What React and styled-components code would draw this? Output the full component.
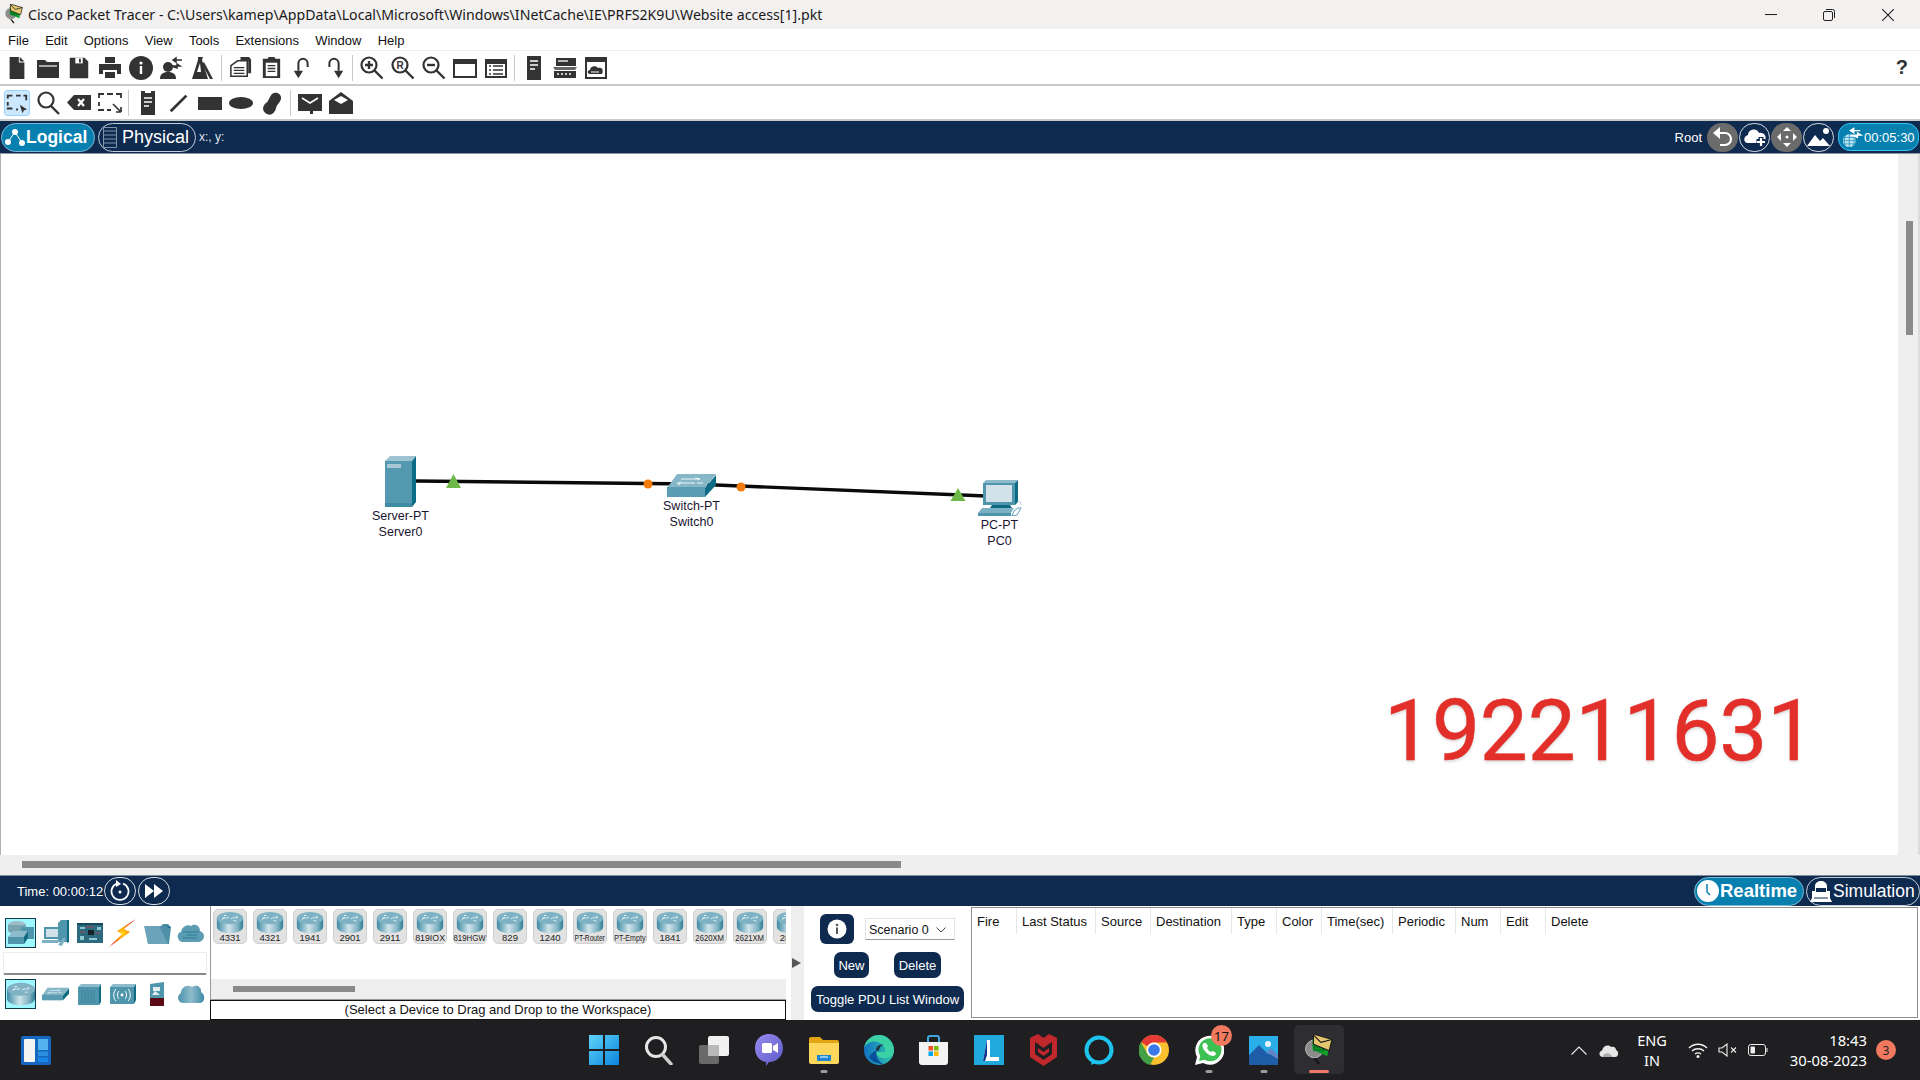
import React, { useId } from "react";
import styled, { createGlobalStyle } from "styled-components";

const Global = createGlobalStyle`
  html, body { margin: 0; padding: 0; background: #fff; }
  * { box-sizing: border-box; }
  body { font-family: "Liberation Sans", Arial, sans-serif; color: #111; }
`;

const NAVY = "#0e2a4f";
const BLUE = "#0780b0";

const Screen = styled.div`
  width: 1920px; height: 1080px; display: flex; flex-direction: column; overflow: hidden;
`;

/* ---- title + menu ---- */
const TitleBar = styled.div`
  height: 29px; flex: none; background: #f3f0f0; display: flex; align-items: center; padding-left: 5px;
`;
const TitleText = styled.span`
  margin-left: 5px; font-family: "Noto Sans", sans-serif; font-size: 14.15px; color: #1a1a1a; white-space: nowrap;
`;
const WinControls = styled.div`
  margin-left: auto; display: flex; height: 100%; align-items: center; padding-right: 3px;
`;
const WinBtn = styled.div`
  width: 58.5px; display: flex; justify-content: center; align-items: center;
`;
const MenuBar = styled.div`
  height: 22px; flex: none; background: #fff; border-bottom: 1px solid #eeeeee; display: flex; align-items: center; padding: 1px 0 0 8px; gap: 16.2px; font-size: 13px;
`;
const MenuItem = styled.span` color: #111; `;

/* ---- toolbars ---- */
const Toolbar = styled.div`
  flex: none; height: ${(p) => p.$h}px; background: #fff; border-bottom: 2px solid ${(p) => p.$line}; display: flex; align-items: center; padding-left: 1px; padding-right: 8px;
`;
const ToolSlot = styled.div`
  width: 31px; height: 26px; display: flex; align-items: center; justify-content: center; flex: none;
`;
const ToolSvg = styled.svg`
  display: block; width: ${(p) => p.$s || 24}px; height: ${(p) => p.$s || 24}px; fill: #333; stroke: none;
  ${(p) => p.$selected && `background:#cce8ff; outline:1px solid #99d1ff; border-radius:2px;`}
`;
const ToolSep = styled.div`
  width: 7px; height: 26px; flex: none; position: relative;
  &::after { content: ""; position: absolute; left: 3px; top: 0; bottom: 0; width: 1px; background: #c9c9c9; }
`;
const HelpMark = styled.span`
  margin-left: auto; font-size: 20px; font-weight: 700; color: #333; margin-right: 4px;
`;

/* ---- nav bar ---- */
const NavBar = styled.div`
  flex: none; height: 33px; background: ${NAVY}; display: flex; align-items: center; padding: 0 1px; color: #fff; border-bottom: 1px solid #8a97a8;
`;
const Pill = styled.div`
  height: 29px; display: flex; align-items: center; border-radius: 15px; color: #fff;
  border: 1px solid ${(p) => (p.$active ? "#7fb6d2" : "#c4cfdb")};
  background: ${(p) => (p.$active ? BLUE : "transparent")};
  font-size: ${(p) => p.$fs}px; font-weight: ${(p) => (p.$active ? 700 : 400)};
  width: ${(p) => p.$w}px; margin-left: ${(p) => p.$ml || 0}px; flex: none; padding-left: ${(p) => p.$pl || 2}px; gap: ${(p) => p.$gap || 0}px;
`;
const Coord = styled.span` font-size: 12px; margin-left: 3px; color: #dfe6ee; `;
const NavRight = styled.div` margin-left: auto; display: flex; align-items: center; gap: 1px; `;
const RootLabel = styled.span` font-size: 13px; margin-right: 4px; `;
const RoundBtn = styled.div`
  width: 31px; height: 29px; border-radius: 15px; display: flex; align-items: center; justify-content: center; flex: none;
  ${(p) => (p.$filled ? "background:#6b6b6b;" : "border:1px solid #d5dce5;")}
`;
const Clock = styled.div`
  width: 81px; height: 28px; margin-left: 3px; background: ${BLUE}; border: 1px solid #35c3f0; border-radius: 12px; display: flex; align-items: center; gap: 1px; padding-left: 2px; font-size: 13px; color: #fff;
`;

/* ---- workspace ---- */
const Workspace = styled.div`
  flex: 1; min-height: 0; display: grid; grid-template-columns: 1fr 22px; grid-template-rows: 1fr 20px; background: #efefef;
`;
const Canvas = styled.div`
  position: relative; background: #fff; border-left: 1px solid #b0b0b0; overflow: hidden;
`;
const LinkLayer = styled.svg`
  position: absolute; inset: 0; width: 100%; height: 100%;
`;
const Node = styled.div`
  position: absolute; left: ${(p) => p.$cx - 60}px; top: ${(p) => p.$top}px; width: 120px; display: flex; flex-direction: column; align-items: center;
`;
const NodeLabel = styled.div`
  font-size: 12.5px; line-height: 15.6px; color: #1a1430; text-align: center; white-space: nowrap;
`;
const NodeLabels = styled.div` margin-top: ${(p) => p.$mt}px; `;
const Watermark = styled.div`
  position: absolute; left: 1383px; top: 527px; font-family: Roboto, sans-serif; font-size: 85.5px; line-height: 100px; color: #e32f29;
  -webkit-text-stroke: .5px #e32f29;
  text-shadow: 0 2px 3px rgba(90, 90, 90, .25); letter-spacing: -.15px;
`;
const VTrack = styled.div`
  border-right: 2px solid #dcdcdc; padding: 67px 0 0 8px;
`;
const VThumb = styled.div` width: 7px; height: 114px; background: #8a8a8a; `;
const HTrack = styled.div` padding: 6px 0 0 22px; grid-column: 1 / 2; `;
const HThumb = styled.div` width: 879px; height: 7px; background: #8a8a8a; `;

/* ---- time bar ---- */
const TimeBar = styled.div`
  flex: none; height: 31px; background: ${NAVY}; border-top: 1px solid #7d8a9b; display: flex; align-items: center; color: #fff; padding-left: 17px; padding-right: 0;
`;
const TimeText = styled.span` font-size: 13px; width: 87px; flex: none; white-space: nowrap; `;
const CircleBtn = styled.div`
  width: 32px; height: 28px; border: 1px solid #d5dce5; border-radius: 15px; display: flex; align-items: center; justify-content: center; flex: none; margin-right: 2px;
`;

/* ---- bottom panel ---- */
const Bottom = styled.div`
  flex: none; height: 114px; display: flex; background: #fff;
`;
const Palette = styled.div`
  width: 210px; flex: none; display: flex; flex-direction: column; padding: 12px 0 0 5px;
`;
const CatRow = styled.div` display: flex; height: 30px; align-items: center; `;
const CatCell = styled.div`
  width: ${(p) => p.$w}px; height: 30px; flex: none; display: flex; align-items: center; justify-content: center;
  ${(p) => p.$on && `background:#9ff8ff; border:1px solid #123a4a;`}
`;
const SubTitle = styled.div`
  height: 23px; width: 204px; margin: 4px 0 4px -2px; border: 1px solid #ececec; border-bottom: 2px solid #8a8a8a; border-radius: 2px; background: #fff;
`;
const Gallery = styled.div`
  width: 576px; flex: none; display: flex; flex-direction: column; border-left: 1px solid #9a9a9a;
`;
const Tiles = styled.div`
  flex: 1; display: flex; gap: 6px; padding: 3px 0 0 2px; overflow: hidden; min-height: 0;
`;
const Tile = styled.div`
  width: 34px; height: 35px; flex: none; background: #e2e2e2; border: 1px solid #cfcfcf; border-radius: 5px; display: flex; flex-direction: column; align-items: center; padding-top: 2px;
`;
const TileLabel = styled.span`
  font-size: 9.5px; line-height: 10px; color: #222; white-space: nowrap; display: inline-block;
  transform: scaleX(${(p) => p.$sx});
`;
const GalleryScroll = styled.div`
  height: 21px; flex: none; background: #eeeeee; padding: 7px 0 0 22px; border-bottom: 1px solid #9a9a9a;
`;
const GalleryThumb = styled.div` width: 122px; height: 6px; background: #8a8a8a; `;
const SelectHint = styled.div`
  height: 20px; flex: none; border: 1.5px solid #111; margin-left: -1px; text-align: center; font-size: 13px; line-height: 17px; color: #111; white-space: nowrap;
`;
const Splitter = styled.div`
  width: 23px; flex: none; display: flex; align-items: center; border-left: 5px solid #fff; border-right: 5px solid #fff; background: #eee; padding-left: 1px;
`;
const ArrowRight = styled.div`
  width: 0; height: 0; border-left: 9px solid #555; border-top: 5px solid transparent; border-bottom: 5px solid transparent;
`;
const Scenario = styled.div`
  width: 162px; flex: none; display: flex; flex-direction: column; align-items: flex-start; padding-top: 8px;
`;
const ScenarioTop = styled.div` display: flex; align-items: center; margin-left: 11px; gap: 11px; height: 30px; `;
const InfoBtn = styled.div`
  width: 34px; height: 30px; background: ${NAVY}; border-radius: 6px; display: flex; align-items: center; justify-content: center;
`;
const Combo = styled.div`
  width: 90px; height: 22px; border: 1px solid #e3e3e3; border-bottom: 1.5px solid #9a9a9a; display: flex; align-items: center; justify-content: space-between; font-size: 12.5px; padding: 1px 8px 0 3px; color: #111;
`;
const NavyBtn = styled.div`
  height: 26px; background: ${NAVY}; color: #fff; border-radius: 7px; font-size: 13px; display: flex; align-items: center; justify-content: center; white-space: nowrap;
  width: ${(p) => p.$w}px; margin-left: ${(p) => p.$ml || 0}px; flex: none;
`;
const BtnRow = styled.div` display: flex; margin-top: 8px; `;
const PduTable = styled.div`
  flex: 1; margin: 1px 2px 2px 0; border: 1.5px solid #8f8f8f; background: #fff; min-width: 0;
`;
const PduHead = styled.div` display: flex; height: 26px; `;
const PduCol = styled.div`
  width: ${(p) => (p.$w ? p.$w + "px" : "auto")}; flex: none; border-right: ${(p) => (p.$w ? "1px solid #e8e8e8" : "none")}; padding: 7px 0 0 5px; font-size: 13px; line-height: 14px; color: #111; white-space: nowrap;
`;

/* ---- taskbar ---- */
const Taskbar = styled.div`
  flex: none; height: 60px; background: #1f1f22; display: flex; align-items: center; color: #fff; padding-left: 21px;
`;
const CenterIcons = styled.div` display: flex; margin-left: 525px; height: 60px; `;
const TaskItem = styled.div`
  width: 55px; height: 60px; flex: none; display: flex; align-items: center; justify-content: center; position: relative;
  ${(p) => p.$active && `
    &::before { content:""; position:absolute; left:2.5px; right:2.5px; top:5px; bottom:6px; background:#2e2e32; border-radius:5px; }
  `}
  & > svg { position: relative; }
`;
const RunDot = styled.span`
  position: absolute; bottom: 7px; left: 50%; transform: translateX(-50%); height: 3px; border-radius: 2px;
  width: ${(p) => (p.$active ? 20 : 7)}px; background: ${(p) => (p.$active ? "#f0796a" : "#9c9c9c")};
`;
const Badge = styled.span`
  position: absolute; top: 5px; left: 30px; width: 21px; height: 21px; border-radius: 50%; background: #f0795f; color: #111; font-family: "Noto Sans", sans-serif; font-size: 13px; display: flex; align-items: center; justify-content: center;
`;
const Tray = styled.div`
  margin-left: auto; display: flex; align-items: center; font-family: "Noto Sans", sans-serif; padding-right: 24px;
`;
const Lang = styled.div`
  width: 46px; margin-left: 10px; text-align: center; font-size: 14.5px; line-height: 20px;
`;
const TrayIcon = styled.svg`
  display: block; flex: none; margin-left: ${(p) => p.$ml || 0}px;
`;
const Clock2 = styled.div`
  text-align: right; font-size: 14.8px; line-height: 20px; margin-left: 9px; width: 90px;
`;
const Notify = styled.span`
  width: 20px; height: 20px; border-radius: 50%; background: #f0795f; color: #222; font-size: 12px; display: flex; align-items: center; justify-content: center; margin-left: 9px;
`;

/* ---- icon helpers ---- */
const Tool = ({ children, selected, s }) => (
  <ToolSlot>
    <ToolSvg viewBox="0 0 26 26" $selected={selected} $s={s}>{children}</ToolSvg>
  </ToolSlot>
);
const W = "#fff";
const D = "#333";

const Mag = ({ children }) => (
  <Tool s={26}>
    <circle cx="10" cy="10" r="7.5" fill="none" stroke={D} strokeWidth="2.2" />
    <path d="M15.5 15.5 L23.5 23.5" stroke={D} strokeWidth="2.4" />
    {children}
  </Tool>
);

const Toolbar1 = () => (
  <Toolbar $h={35} $line="#c9c9c9">
    <Tool><path d="M5 1h10v6h6v18H5z" /><path d="M16 1l5 5h-5z" /></Tool>
    <Tool s={26}><path d="M2 5h8l2 2h12v16H2z" /><path d="M4 11h18" stroke={W} strokeWidth="1.2" /></Tool>
    <Tool><path d="M3 2h16l4 4v18H3z" /><path d="M9 2h8v6H9z" fill={W} /><path d="M13 3h2v4h-2z" /></Tool>
    <Tool s={26}><path d="M8 2h10v6H8z" /><path d="M2 9h22v10h-4v-4H6v4H2z" /><path d="M8 17h10v6H8z" /></Tool>
    <Tool s={26}><circle cx="13" cy="13" r="12" /><circle cx="13" cy="8" r="1.6" fill={W} /><path d="M11.8 11h2.4v8h-2.4z" fill={W} /></Tool>
    <Tool s={26}>
      <circle cx="9" cy="12" r="5" /><path d="M1 24c0-5 3-7 8-7s8 2 8 7z" />
      <path d="M14 5h9M14 5l3-2v4z M12 11h9l-3-2v4z" stroke={D} strokeWidth="1.5" />
    </Tool>
    <Tool s={26}><path d="M8 2h5l-1 3 6 19H2L8 5z" /><path d="M14 7l9 17h-3L12 9z" /><path d="M7 17l3-9 1 9z" fill={W} /></Tool>
    <ToolSep />
    <Tool s={25}>
      <path d="M10 6h10v16H3V11z" fill="none" stroke={D} strokeWidth="1.6" />
      <path d="M13 2h9l2 3v14h-3V6h-8z" />
      <path d="M6 13h11M6 16h11M6 19h11" stroke={D} strokeWidth="1.3" />
    </Tool>
    <Tool s={25}>
      <path d="M4 4h5l1-2h6l1 2h5v20H4z" /><path d="M7 8h12v14H7z" fill={W} />
      <path d="M9 11h8M9 14h8M9 17h8" stroke={D} strokeWidth="1.4" />
    </Tool>
    <Tool><path d="M18 12V8a5 5 0 0 0-10 0v8" fill="none" stroke={D} strokeWidth="2.2" /><path d="M3 16h10l-5 8z" /></Tool>
    <Tool><path d="M8 12V8a5 5 0 0 1 10 0v8" fill="none" stroke={D} strokeWidth="2.2" /><path d="M13 16h10l-5 8z" /></Tool>
    <ToolSep />
    <Mag><path d="M10 6v8M6 10h8" stroke={D} strokeWidth="2.4" /></Mag>
    <Mag><text x="10" y="13.6" textAnchor="middle" fontSize="10" fontWeight="700" fontFamily="Liberation Sans" fill={D}>R</text></Mag>
    <Mag><path d="M6 10h8" stroke={D} strokeWidth="2.4" /></Mag>
    <Tool s={26}><path d="M2 5h22v17H2z" fill="none" stroke={D} strokeWidth="2" /><path d="M2 5h22v4H2z" /></Tool>
    <Tool s={26}>
      <path d="M2 4h22v19H2z" /><path d="M4 9h18v12H4z" fill={W} />
      <path d="M10 11h10M10 15h10M10 19h10M6 11h2M6 15h2M6 19h2" stroke={D} strokeWidth="1.6" />
    </Tool>
    <ToolSep />
    <Tool s={26}><path d="M6 1h14v24H6z" /><path d="M9 6h8M9 10h8M9 14h5" stroke={W} strokeWidth="1.4" /></Tool>
    <Tool s={26}>
      <path d="M4 3h20v8H4z" /><path d="M6 6h10" stroke={W} strokeWidth="1.3" />
      <path d="M1 12h24l-2 3H3z" fill="#666" /><path d="M2 16h22v7H2z" />
      <path d="M5 19h2M9 19h2M13 19h2M17 19h2" stroke={W} strokeWidth="1.6" />
    </Tool>
    <Tool s={26}>
      <path d="M2 2h22v22H2z" /><path d="M4 7h18v15H4z" fill={W} />
      <path d="M7 19c-3 0-3-4 0-4 0-4 6-5 8-2 4-1 6 2 4 6z" fill={D} /><path d="M8 17h8" stroke={W} strokeWidth="1" />
    </Tool>
    <HelpMark>?</HelpMark>
  </Toolbar>
);

const Toolbar2 = () => (
  <Toolbar $h={35} $line="#c9c9c9">
    <Tool selected>
      <path d="M3 8V5h5M12 5h5M3 12v4M3 20v-1h5M12 20h2" fill="none" stroke={D} strokeWidth="2" />
      <path d="M20 5h3v5" fill="none" stroke={D} strokeWidth="2" />
      <path d="M16 15l8 5-3.5.8L19 24z" />
    </Tool>
    <Tool s={26}><circle cx="11" cy="10" r="7.5" fill="none" stroke={D} strokeWidth="2.2" /><path d="M16 16l8 8" stroke={D} strokeWidth="2.4" /></Tool>
    <Tool s={26}><path d="M8 5h17v15H8L1 12.500z" /><path d="M12 9l6 7M18 9l-6 7" stroke={W} strokeWidth="2.2" /></Tool>
    <Tool s={26}>
      <path d="M2 8V4h5M10 4h6M19 4h5v4M2 12v4M2 19v1h5M10 20h4" fill="none" stroke={D} strokeWidth="1.8" />
      <path d="M16 14l8 8M24 22v-5M24 22h-5" fill="none" stroke={D} strokeWidth="1.7" />
    </Tool>
    <ToolSep />
    <Tool s={26}><path d="M6 1h4v2h6V1h4v24H6z" /><path d="M9 8h8M9 12h8M9 16h5" stroke={W} strokeWidth="1.5" /></Tool>
    <Tool><path d="M4 22 L21 5" stroke={D} strokeWidth="3" /></Tool>
    <Tool s={26}><path d="M1 7h24v13H1z" /></Tool>
    <Tool s={26}><ellipse cx="13" cy="13" rx="12" ry="6" /></Tool>
    <Tool s={26}><path d="M8 24c-5-2-5-8-1-11 3-2 3-6 6-9 4-3 10 0 9 5-1 4-4 5-5 9-1 5-5 8-9 6z" /></Tool>
    <ToolSep />
    <Tool s={26}><path d="M1 4h24v17h-9v3h-3v-3H1z" /><path d="M5 8l8 5 8-5" fill="none" stroke={W} strokeWidth="1.6" /></Tool>
    <Tool s={26}><path d="M1 11 L13 2 L25 11v13H1z" /><path d="M6 10l7-4 7 4-7 4z" fill={W} /></Tool>
  </Toolbar>
);

/* Teal device art */
const Router = ({ w = 30, h = 24 }) => {
  const id = useId();
  return (
    <svg width={w} height={h} viewBox="0 0 30 24">
      <defs>
        <linearGradient id={id} x1="0" x2="1" y1="0" y2="0">
          <stop offset="0" stopColor="#3d8aa5" />
          <stop offset=".45" stopColor="#cfe4ea" />
          <stop offset=".8" stopColor="#7fb0c0" />
          <stop offset="1" stopColor="#2c7d98" />
        </linearGradient>
      </defs>
      <path d="M0 7v10c0 4 7 7 15 7s15-3 15-7V7z" fill={`url(#${id})`} />
      <ellipse cx="15" cy="7" rx="15" ry="7" fill="#7fb2c4" />
      <path d="M6 8c3-3 5 0 8-2M9 6.500l-3 1.500M16 8c3-3 5 0 8-2M22 4.500l2 1.500M8 4h3M19 10h3" fill="none" stroke="#eaf5f8" strokeWidth="1" />
    </svg>
  );
};
const Switch = ({ w = 49, h = 23 }) => (
  <svg width={w} height={h} viewBox="0 0 49 23">
    <path d="M0 14L10 0h39L38 14z" fill="#86b7c8" />
    <path d="M0 13h38v10H0z" fill="#5a9db3" />
    <path d="M38 14L49 1v10L38 23z" fill="#0d6b84" />
    <path d="M14 5h18M28 4l5 1-2 1M12 9h16M14 8l-4 1.500 3 1M30 9h6" stroke="#eef7f9" strokeWidth="1" fill="none" />
  </svg>
);
const Server = () => (
  <svg width="31" height="51" viewBox="0 0 31 51">
    <path d="M0 5L5 0h26l-4 5z" fill="#9cc3d0" />
    <path d="M27 5l4-5v46l-4 5z" fill="#0e6d86" />
    <path d="M0 5h27v46H0z" fill="#5499b0" />
    <path d="M0 47h27v4H0z" fill="#3f8ba3" />
    <path d="M2 8h14v4H2z" fill="#a5c8d4" />
  </svg>
);
const Pc = ({ w = 44, h = 36 }) => (
  <svg width={w} height={h} viewBox="0 0 44 36">
    <path d="M5 3L8 0h32l-3 3z" fill="#8ebbcb" />
    <path d="M37 3l3-3v22l-3 3z" fill="#0f6b84" />
    <path d="M5 3h32v22H5z" fill="#4f96ad" />
    <path d="M8 5h26v17H8z" fill="#d3e2ea" />
    <path d="M14 25h18l2 3H12z" fill="#0f6b84" />
    <path d="M4 28h32l-3 5H0z" fill="#7db0c2" />
    <path d="M0 33h33v3H0z" fill="#4f96ad" />
    <path d="M36 31l4-3 3 0-4 7-5 1z" fill="#fff" stroke="#5a9db3" strokeWidth="1" />
    <path d="M39 22c2-2 4 0 4 3" fill="none" stroke="#9cc3d0" strokeWidth=".8" />
  </svg>
);
const FlatCloud = () => {
  const id = useId();
  return (
    <svg width="28" height="24" viewBox="0 0 28 24">
      <defs>
        <linearGradient id={id} x1="0" x2="1" y1="0" y2="0">
          <stop offset="0" stopColor="#4a93ad" /><stop offset=".5" stopColor="#8fbccb" /><stop offset="1" stopColor="#3f8aa5" />
        </linearGradient>
      </defs>
      <path d="M6 21C1 21-1 14 4 11 4 5 11 2 15 5c4-3 10 0 9 5 5 3 4 11-2 11z" fill={`url(#${id})`} />
    </svg>
  );
};
const CatIcons = {
  combo: () => (
    <svg width="28" height="28" viewBox="0 0 28 28">
      <ellipse cx="10" cy="6" rx="9" ry="4" fill="#9fbcc6" /><path d="M1 6v5c0 2 4 4 9 4s9-2 9-4V6z" fill="#7aa3b2" />
      <path d="M14 8h13v12H14z" fill="#4f96ad" /><path d="M1 18l5-6h15l-4 6z" fill="#8ebbcb" /><path d="M1 18h16v7H1z" fill="#4f96ad" /><path d="M17 18l4-6v7l-4 6z" fill="#0f6b84" />
    </svg>
  ),
  end: () => (
    <svg width="27" height="28" viewBox="0 0 27 28">
      <path d="M16 4l3-3h8v22h-11z" fill="#4f96ad" /><path d="M25 1l2 0v22l-2 1z" fill="#0f6b84" />
      <path d="M2 8h16v12H2z" fill="#4f96ad" /><path d="M4 10h12v8H4z" fill="#cfe0e8" />
      <path d="M0 21h18l-2 3H0z" fill="#7db0c2" /><path d="M16 26l5-7h3l-4 8z" fill="#7db0c2" />
    </svg>
  ),
  board: () => (
    <svg width="26" height="20" viewBox="0 0 26 20">
      <path d="M0 0h26v20H0z" fill="#2e6a7d" /><path d="M0 0h26v2H0z" fill="#174a5d" />
      <path d="M11 7h6v5h-6z" fill="#16222a" /><path d="M3 4h5v2H3zM20 4h4v3h-4zM3 13h4v4H3zM12 15h8v2h-8z" fill="#8fc6d4" />
      <path d="M3 9h5M18 10h5M9 4h8" stroke="#a2445c" strokeWidth="1" />
    </svg>
  ),
  bolt: () => (
    <svg width="28" height="28" viewBox="0 0 28 28">
      <defs>
        <radialGradient id="boltg" cx=".5" cy=".5" r=".5">
          <stop offset="0" stopColor="#ffd60a" /><stop offset=".45" stopColor="#ff9a0a" /><stop offset="1" stopColor="#ea2a10" />
        </radialGradient>
      </defs>
      <path d="M27 0L8 12l5 3L0 28l21-15-6-3z" fill="url(#boltg)" />
    </svg>
  ),
  folder: () => (
    <svg width="27" height="22" viewBox="0 0 27 22">
      <path d="M1 4h16l2-2h5l3 3-2 17H4z" fill="#4f8fa8" /><path d="M0 4h15l9 18H4z" fill="#6ba4ba" />
      <path d="M19 2l6 3h2l-2 1z" fill="#0f5d75" />
    </svg>
  ),
  wan: () => (
    <svg width="28" height="21" viewBox="0 0 28 21">
      <path d="M5 19C0 18-1 10 4 9c1-6 7-8 10-6 4-3 9 0 9 5 6 2 5 10-1 11z" fill="#5b9cb3" />
      <path d="M6 9h16M10 12h10M6 15h14" stroke="#2c7d98" strokeWidth="1.2" />
    </svg>
  ),
  cube: () => (
    <svg width="23" height="21" viewBox="0 0 23 21">
      <path d="M0 3l3-3h20l-2 3z" fill="#8ebbcb" /><path d="M21 3l2-3v18l-2 3z" fill="#0f6b84" />
      <path d="M0 3h21v18H0z" fill="#4f96ad" />
      <path d="M4 6v13M7 6v13M10 6v13M13 6v13M16 6v13" stroke="#3c7f96" strokeWidth=".9" />
    </svg>
  ),
  wifi: () => (
    <svg width="26" height="20" viewBox="0 0 26 20">
      <path d="M0 3l3-3h23l-2 3z" fill="#8ebbcb" /><path d="M24 3l2-3v16l-2 4z" fill="#0f6b84" />
      <path d="M0 3h24v17H0z" fill="#4f96ad" />
      <circle cx="12" cy="11" r="1.400" fill="#fff" />
      <path d="M9 7c-2 2-2 6 0 8M15 7c2 2 2 6 0 8M6 5c-3 3-3 9 0 12M18 5c3 3 3 9 0 12" fill="none" stroke="#fff" strokeWidth="1" />
    </svg>
  ),
  sec: () => (
    <svg width="16" height="24" viewBox="0 0 16 24">
      <path d="M1 2l14-2v24H1z" fill="#4f96ad" /><path d="M1 16h14v8H1z" fill="#5a0a14" />
      <path d="M4 5h7v4h-7zM6 9l5 4H3z" fill="#e4eef1" />
    </svg>
  ),
};

const tiles = [
  ["4331", 1], ["4321", 1], ["1941", 1], ["2901", 1], ["2911", 1], ["819IOX", 0.93], ["819HGW", 0.82], ["829", 1], ["1240", 1],
  ["PT-Router", 0.7], ["PT-Empty", 0.75], ["1841", 1], ["2620XM", 0.81], ["2621XM", 0.81], ["2811", 1],
];
const cols = [
  ["Fire", 45], ["Last Status", 79], ["Source", 55], ["Destination", 81], ["Type", 45], ["Color", 45],
  ["Time(sec)", 71], ["Periodic", 63], ["Num", 45], ["Edit", 45], ["Delete"],
];

const Win11 = () => (
  <svg width="30" height="30" viewBox="0 0 30 30">
    <defs><linearGradient id="wing" x1="0" x2="1" y1="0" y2="1"><stop offset="0" stopColor="#5fd4fb" /><stop offset="1" stopColor="#0a84dd" /></linearGradient></defs>
    <path d="M0 0h14v14H0zM16 0h14v14H16zM0 16h14v14H0zM16 16h14v14H16z" fill="url(#wing)" />
  </svg>
);
const SearchIco = () => (
  <svg width="30" height="30" viewBox="0 0 30 30">
    <circle cx="12" cy="12" r="9.500" fill="none" stroke="#e6e6e6" strokeWidth="3" />
    <path d="M18.500 19.500L27 29" stroke="#cfcfcf" strokeWidth="3.400" strokeLinecap="round" />
  </svg>
);
const TaskView = () => (
  <svg width="30" height="30" viewBox="0 0 30 30">
    <rect x="0" y="10" width="20" height="19" rx="2" fill="#6a6a6a" />
    <rect x="9" y="1" width="21" height="20" rx="2" fill="#f0f0f0" />
    <rect x="9" y="10" width="11" height="11" fill="#b9b9b9" />
  </svg>
);
const Meet = () => (
  <svg width="30" height="32" viewBox="0 0 30 32">
    <defs><linearGradient id="meetg" x1="0" x2="1" y1="0" y2="1"><stop offset="0" stopColor="#9a8cf0" /><stop offset="1" stopColor="#5b59c8" /></linearGradient></defs>
    <path d="M15 0c8 0 14 6 14 14s-6 14-14 14l-3 4v-4C5 27 1 21 1 14 1 6 7 0 15 0z" fill="url(#meetg)" />
    <rect x="8" y="9" width="10" height="10" rx="1.500" fill="#fff" /><path d="M19 12l5-3v10l-5-3z" fill="#fff" />
  </svg>
);
const Explorer = () => (
  <svg width="30" height="27" viewBox="0 0 30 27">
    <path d="M0 2a2 2 0 0 1 2-2h9l3 3h14a2 2 0 0 1 2 2v3H0z" fill="#e3a513" />
    <path d="M0 6h30v19a2 2 0 0 1-2 2H2a2 2 0 0 1-2-2z" fill="#fdd75c" />
    <path d="M8 18h14v5a1 1 0 0 1-1 1H9a1 1 0 0 1-1-1z" fill="#1c86d4" /><path d="M11 20h8" stroke="#b6e0fb" strokeWidth="1.500" />
  </svg>
);
const Edge = () => (
  <svg width="30" height="30" viewBox="0 0 30 30">
    <defs>
      <linearGradient id="edgea" x1="0" x2="1" y1="0" y2="0"><stop offset="0" stopColor="#1172c4" /><stop offset="1" stopColor="#2fc6a8" /></linearGradient>
    </defs>
    <circle cx="15" cy="15" r="15" fill="url(#edgea)" />
    <path d="M30 16c0-9-7-16-15-16C7 0 1 6 0 13c3-6 10-8 16-5 4 2 6 6 5 9h-9c0 6 8 8 16 4 1-2 2-3 2-5z" fill="#3cd0a5" />
    <path d="M5 22c3 5 9 7 14 7-5-3-8-8-6-14C9 17 6 19 5 22z" fill="#0a4f99" />
    <path d="M12 15c0-4 4-6 8-5-3 0-5 3-5 6z" fill="#1f1f22" opacity=".85" />
  </svg>
);
const Store = () => (
  <svg width="29" height="30" viewBox="0 0 29 30">
    <path d="M9 7V3a2 2 0 0 1 2-2h7a2 2 0 0 1 2 2v4" fill="none" stroke="#3fa7e0" strokeWidth="2" />
    <path d="M0 7h29v20a3 3 0 0 1-3 3H3a3 3 0 0 1-3-3z" fill="#f3f3f3" />
    <path d="M9.500 11h4.500v4.500H9.500z" fill="#f25022" /><path d="M15 11h4.500v4.500H15z" fill="#7fba00" />
    <path d="M9.500 16.500h4.500V21H9.500z" fill="#00a4ef" /><path d="M15 16.500h4.500V21H15z" fill="#ffb900" />
  </svg>
);
const LApp = () => (
  <svg width="30" height="30" viewBox="0 0 30 30">
    <path d="M0 0h30v30H0z" fill="#1fa9dc" />
    <path d="M9 26L13 5h3v17h9v4z" fill="#fff" />
    <path d="M9 26L13 5v15l-2 6z" fill="#0d3a8c" />
  </svg>
);
const McAfee = () => (
  <svg width="27" height="32" viewBox="0 0 27 32">
    <path d="M0 4l8-4 5.500 4L19 0l8 4v19l-13.500 9L0 23z" fill="#c0282d" />
    <path d="M5 8l3 2 5.500 4L19 10l3-2v12l-8.500 6L5 20z" fill="#1f1f22" />
    <path d="M8 14l5.500 4 5.500-4v4l-5.500 4L8 18z" fill="#c0282d" />
  </svg>
);
const Alexa = () => (
  <svg width="30" height="31" viewBox="0 0 30 31">
    <circle cx="15" cy="15" r="12.500" fill="none" stroke="#1ec3ee" strokeWidth="4" />
    <path d="M8 25l-1 5 6-3z" fill="#1ec3ee" />
  </svg>
);
const Chrome = () => (
  <svg width="30" height="30" viewBox="0 0 30 30">
    <circle cx="15" cy="15" r="15" fill="#fbc02d" />
    <path d="M15 0a15 15 0 0 1 13 7.500H15a7.500 7.500 0 0 0-6.500 3.800L2.100 7.300A15 15 0 0 1 15 0z" fill="#e53935" />
    <path d="M2 7.300L8.500 19a7.500 7.500 0 0 0 6.500 3.500L11 30A15 15 0 0 1 2 7.300z" fill="#43a047" />
    <circle cx="15" cy="15" r="7.500" fill="#fff" /><circle cx="15" cy="15" r="5.800" fill="#3b78e7" />
  </svg>
);
const WhatsApp = () => (
  <svg width="30" height="30" viewBox="0 0 30 30">
    <path d="M1 30l2-8a14.500 14.500 0 1 1 6 6z" fill="#fff" />
    <path d="M5 26l1.300-5a11.500 11.500 0 1 1 4 3.800z" fill="#3cc152" />
    <path d="M10 8c-2 1-2 4 0 7s6 6 9 6c2 0 3-2 3-3l-3-2-2 1c-2-1-3-2-4-4l1-2-2-3z" fill="#fff" />
  </svg>
);
const Photos = () => (
  <svg width="29" height="29" viewBox="0 0 29 29">
    <path d="M0 0h29v29H0z" fill="#2aaee9" />
    <circle cx="19" cy="8" r="3" fill="#eaf6fd" />
    <path d="M0 29V19l10-10 9 9 3-2 7 6v7z" fill="#1e5ea8" /><path d="M17 16l5-4 7 7v4z" fill="#5f86c9" />
  </svg>
);
const PtGlyph = ({ s = 30 }) => (
  <svg width={s} height={s * 1.13} viewBox="0 0 30 34">
    <path d="M7 22l8 10" stroke="#141414" strokeWidth="2.200" />
    <circle cx="10" cy="16" r="9.500" fill="#8c8c8c" stroke="#bdbdbd" strokeWidth="1" />
    <path d="M8 5l18 7-2 12-16-7z" fill="#11a02a" />
    <path d="M10 8v11M13 8v11M16 9v11M19 9v11M9 11h13M9 14h14M9 17h13" stroke="#062" strokeWidth=".8" />
    <path d="M9 0l20 6-3 12-17-7z" fill="#e4c56f" stroke="#1a1a1a" strokeWidth="1.200" />
    <path d="M9 1l8 8 12-3" fill="none" stroke="#1a1a1a" strokeWidth="1.200" />
  </svg>
);

const Tel = ({ w, h, vb, children }) => <svg width={w} height={h} viewBox={vb}>{children}</svg>;

export default function App() {
  return (
    <>
      <Global />
      <Screen>
        <TitleBar>
          <PtGlyph s={18} />
          <TitleText>Cisco Packet Tracer - C:\Users\kamep\AppData\Local\Microsoft\Windows\INetCache\IE\PRFS2K9U\Website access[1].pkt</TitleText>
          <WinControls>
            <WinBtn><Tel w={12} h={2} vb="0 0 12 2"><path d="M0 .5h12" stroke="#222" strokeWidth="1.100" /></Tel></WinBtn>
            <WinBtn>
              <Tel w={12} h={12} vb="0 0 12 12">
                <rect x=".5" y="2.500" width="9" height="9" rx="1.500" fill="none" stroke="#222" />
                <path d="M3 .5h6.500a2 2 0 0 1 2 2V9" fill="none" stroke="#222" />
              </Tel>
            </WinBtn>
            <WinBtn><Tel w={12} h={12} vb="0 0 12 12"><path d="M0 0l12 12M12 0L0 12" stroke="#222" strokeWidth="1.100" /></Tel></WinBtn>
          </WinControls>
        </TitleBar>

        <MenuBar>
          {["File", "Edit", "Options", "View", "Tools", "Extensions", "Window", "Help"].map((m) => (
            <MenuItem key={m}>{m}</MenuItem>
          ))}
        </MenuBar>

        <Toolbar1 />
        <Toolbar2 />

        <NavBar>
          <Pill $active $fs={17.5} $w={94} $pl={1}>
            <Tel w={23} h={24} vb="1 0 23 24">
              <circle cx="6" cy="17" r="3" fill="#fff" /><circle cx="13" cy="7" r="3" fill="#fff" /><circle cx="20" cy="18" r="3" fill="#fff" />
              <path d="M6 17l7-10 7 11" stroke="#fff" strokeWidth="1" fill="none" />
            </Tel>
            Logical
          </Pill>
          <Pill $fs={18} $w={98} $ml={3} $pl={4} $gap={5}>
            <Tel w={14} h={21} vb="0 0 14 21">
              <path d="M.5.5h13v20H.5zM.5 4h13M.5 8h13M.5 12h13M.5 16h13" fill="none" stroke="#7f93aa" strokeWidth="1" />
            </Tel>
            Physical
          </Pill>
          <Coord>x:, y:</Coord>
          <NavRight>
            <RootLabel>Root</RootLabel>
            <RoundBtn $filled>
              <Tel w={22} h={20} vb="0 0 22 20">
                <path d="M2 6h11a6 6 0 0 1 0 12H8" fill="none" stroke="#fff" strokeWidth="2.200" /><path d="M8 0L1 6l7 6z" fill="#fff" />
              </Tel>
            </RoundBtn>
            <RoundBtn>
              <Tel w={24} h={20} vb="0 0 24 20">
                <path d="M5 16C0 16 0 9 5 8c0-6 9-8 11-2 5-1 8 3 6 8l-3 2z" fill="#fff" />
                <path d="M18 10v9M13.500 14.500h9" stroke="#0e2a4f" strokeWidth="5" /><path d="M18 11v8M14 15h8" stroke="#fff" strokeWidth="2.200" />
              </Tel>
            </RoundBtn>
            <RoundBtn $filled>
              <Tel w={22} h={22} vb="0 0 22 22">
                <path d="M11 1l4 4H7zM11 21l-4-4h8zM1 11l4-4v8zM21 11l-4 4V7z" fill="#fff" /><circle cx="11" cy="11" r="1.500" fill="#fff" />
              </Tel>
            </RoundBtn>
            <RoundBtn>
              <Tel w={24} h={20} vb="0 0 24 20">
                <circle cx="19" cy="4" r="3" fill="#fff" /><path d="M0 19l8-11 5 6 3-3 7 8z" fill="#fff" />
              </Tel>
            </RoundBtn>
            <Clock>
              <Tel w={22} h={22} vb="0 0 24 24">
                <circle cx="9" cy="16" r="7" fill="#bfe5f2" />
                <path d="M2 16h14M9 9v14M5 10c-2 3-2 9 0 12M13 10c2 3 2 9 0 12M3 12.500h12M3 19.500h12" stroke="#0780b0" strokeWidth=".7" fill="none" />
                <path d="M10 5h11M10 5l4-2.500v5zM11 10h11l-4-2.500v5z" stroke="#fff" strokeWidth="1.300" fill="#fff" />
              </Tel>
              00:05:30
            </Clock>
          </NavRight>
        </NavBar>

        <Workspace>
          <Canvas>
            <LinkLayer>
              <path d="M415 327 L691 330" stroke="#0a0a0a" strokeWidth="3.400" fill="none" />
              <path d="M691 330 L985 342" stroke="#0a0a0a" strokeWidth="3.400" fill="none" />
              <path d="M445 334h15l-7.500-14z" fill="#6cb94a" />
              <path d="M949.500 347h15l-7.500-13z" fill="#6cb94a" />
              <circle cx="647" cy="330" r="4.500" fill="#f57a0c" />
              <circle cx="740" cy="333" r="4.500" fill="#f57a0c" />
            </LinkLayer>
            <Node $cx={399.5} $top={302}>
              <Server />
              <NodeLabels $mt={2}><NodeLabel>Server-PT</NodeLabel><NodeLabel>Server0</NodeLabel></NodeLabels>
            </Node>
            <Node $cx={690.5} $top={320}>
              <Switch />
              <NodeLabels $mt={2}><NodeLabel>Switch-PT</NodeLabel><NodeLabel>Switch0</NodeLabel></NodeLabels>
            </Node>
            <Node $cx={998.5} $top={326}>
              <Pc />
              <NodeLabels $mt={2}><NodeLabel>PC-PT</NodeLabel><NodeLabel>PC0</NodeLabel></NodeLabels>
            </Node>
            <Watermark>192211631</Watermark>
          </Canvas>
          <VTrack><VThumb /></VTrack>
          <HTrack><HThumb /></HTrack>
        </Workspace>

        <TimeBar>
          <TimeText>Time: 00:00:12</TimeText>
          <CircleBtn>
            <Tel w={20} h={22} vb="0 0 20 22">
              <path d="M7 3.500a8.500 8.500 0 1 0 6 0" fill="none" stroke="#fff" strokeWidth="1.800" /><path d="M6 0v7l5-3z" fill="#fff" /><circle cx="10" cy="12" r="1.500" fill="#fff" />
            </Tel>
          </CircleBtn>
          <CircleBtn>
            <Tel w={18} h={14} vb="0 0 18 14"><path d="M0 0l9 7-9 7zM9 0l9 7-9 7z" fill="#fff" /></Tel>
          </CircleBtn>
          <NavRight>
            <Pill $active $fs={18.5} $w={110} $pl={1}>
              <Tel w={24} h={24} vb="0 0 24 24">
                <circle cx="12" cy="12" r="11" fill="#fff" /><path d="M11 5v8l3 3" fill="none" stroke="#0780b0" strokeWidth="1.500" />
              </Tel>
              Realtime
            </Pill>
            <Pill $fs={17.5} $w={114} $ml={1} $pl={3} $gap={1}>
              <Tel w={22} h={22} vb="0 0 22 22">
                <path d="M5 6c0-3 3-5 6-5s6 2 6 5v5h3v7l2 4H0l2-4v-7h3z" fill="#fff" /><path d="M6 8h10v4H6z" fill="#0e2a4f" /><path d="M4 18h14" stroke="#0e2a4f" strokeWidth="1" />
              </Tel>
              Simulation
            </Pill>
          </NavRight>
        </TimeBar>

        <Bottom>
          <Palette>
            <CatRow>
              <CatCell $on $w={31}><CatIcons.combo /></CatCell>
              <CatCell $w={38}><CatIcons.end /></CatCell>
              <CatCell $w={31}><CatIcons.board /></CatCell>
              <CatCell $w={36}><CatIcons.bolt /></CatCell>
              <CatCell $w={32}><CatIcons.folder /></CatCell>
              <CatCell $w={36}><CatIcons.wan /></CatCell>
            </CatRow>
            <SubTitle />
            <CatRow>
              <CatCell $on $w={31}><Router w={28} h={24} /></CatCell>
              <CatCell $w={38}><Switch w={27} h={14} /></CatCell>
              <CatCell $w={31}><CatIcons.cube /></CatCell>
              <CatCell $w={36}><CatIcons.wifi /></CatCell>
              <CatCell $w={32}><CatIcons.sec /></CatCell>
              <CatCell $w={36}><FlatCloud /></CatCell>
            </CatRow>
          </Palette>

          <Gallery>
            <Tiles>
              {tiles.map(([name, sx]) => (
                <Tile key={name}>
                  <Router w={30} h={21} />
                  <TileLabel $sx={sx}>{name}</TileLabel>
                </Tile>
              ))}
            </Tiles>
            <GalleryScroll><GalleryThumb /></GalleryScroll>
            <SelectHint>(Select a Device to Drag and Drop to the Workspace)</SelectHint>
          </Gallery>

          <Splitter><ArrowRight /></Splitter>

          <Scenario>
            <ScenarioTop>
              <InfoBtn>
                <Tel w={20} h={20} vb="0 0 20 20">
                  <circle cx="10" cy="10" r="9.500" fill="#fff" /><circle cx="10" cy="6" r="1.300" fill="#555" /><path d="M9 8.500h2V15H9z" fill="#555" />
                </Tel>
              </InfoBtn>
              <Combo>
                Scenario 0
                <Tel w={10} h={6} vb="0 0 10 6"><path d="M.5.5L5 5 9.500.5" fill="none" stroke="#444" strokeWidth="1" /></Tel>
              </Combo>
            </ScenarioTop>
            <BtnRow>
              <NavyBtn $w={35} $ml={25}>New</NavyBtn>
              <NavyBtn $w={47} $ml={25}>Delete</NavyBtn>
            </BtnRow>
            <BtnRow>
              <NavyBtn $w={153} $ml={2}>Toggle PDU List Window</NavyBtn>
            </BtnRow>
          </Scenario>

          <PduTable>
            <PduHead>
              {cols.map(([c, w]) => (
                <PduCol key={c} $w={w}>{c}</PduCol>
              ))}
            </PduHead>
          </PduTable>
        </Bottom>

        <Taskbar>
          <Tel w={30} h={29} vb="0 0 30 29">
            <rect width="30" height="29" rx="2" fill="#1667c0" />
            <rect x="3" y="3" width="11" height="23" rx="1" fill="#f4f4f4" />
            <rect x="17" y="3" width="10" height="11" fill="#55b4ee" />
            <rect x="17" y="15.500" width="10" height="4.500" fill="#2d8fe0" />
            <rect x="17" y="21.500" width="10" height="4.500" fill="#1a86e8" />
          </Tel>
          <CenterIcons>
            <TaskItem><Win11 /></TaskItem>
            <TaskItem><SearchIco /></TaskItem>
            <TaskItem><TaskView /></TaskItem>
            <TaskItem><Meet /></TaskItem>
            <TaskItem><Explorer /><RunDot /></TaskItem>
            <TaskItem><Edge /></TaskItem>
            <TaskItem><Store /></TaskItem>
            <TaskItem><LApp /></TaskItem>
            <TaskItem><McAfee /></TaskItem>
            <TaskItem><Alexa /></TaskItem>
            <TaskItem><Chrome /></TaskItem>
            <TaskItem><WhatsApp /><Badge>17</Badge><RunDot /></TaskItem>
            <TaskItem><Photos /><RunDot /></TaskItem>
            <TaskItem $active><PtGlyph s={28} /><RunDot $active /></TaskItem>
          </CenterIcons>
          <Tray>
            <Tel w={16} h={9} vb="0 0 16 9"><path d="M.5 8.500L8 1l7.500 7.500" fill="none" stroke="#eee" strokeWidth="1.100" /></Tel>
            <TrayIcon width="20" height="13" viewBox="0 0 20 13" $ml={12}>
              <path d="M4 13C0 13-1 8 3 6.500 4 2 9 0 12 3c3-1 5 1 5 3 3 1 3 7-1 7z" fill="#e6e6e6" />
              <path d="M4 13c0-3 4-5 7-3l3 3z" fill="#aaa" />
            </TrayIcon>
            <Lang>ENG<br />IN</Lang>
            <TrayIcon width="20" height="15" viewBox="0 0 20 15" $ml={13}>
              <path d="M1 5c5-5 13-5 18 0M4 8c3-3 9-3 12 0M7 11c2-1.500 4-1.500 6 0" fill="none" stroke="#f2f2f2" strokeWidth="1.400" />
              <circle cx="10" cy="13.500" r="1.500" fill="#f2f2f2" />
            </TrayIcon>
            <TrayIcon width="19" height="14" viewBox="0 0 19 14" $ml={10}>
              <path d="M1 5h3l5-4v12l-5-4H1z" fill="none" stroke="#eee" strokeWidth="1.100" />
              <path d="M13 4.500l5 5M18 4.500l-5 5" stroke="#eee" strokeWidth="1.100" />
            </TrayIcon>
            <TrayIcon width="20" height="12" viewBox="0 0 20 12" $ml={11}>
              <rect x=".5" y=".5" width="17" height="11" rx="2.500" fill="none" stroke="#eee" />
              <rect x="2.500" y="2.500" width="4.500" height="7" rx="1" fill="#eee" />
              <path d="M18.500 4h1v4h-1z" fill="#eee" />
            </TrayIcon>
            <Clock2>18:43<br />30-08-2023</Clock2>
            <Notify>3</Notify>
          </Tray>
        </Taskbar>
      </Screen>
    </>
  );
}
